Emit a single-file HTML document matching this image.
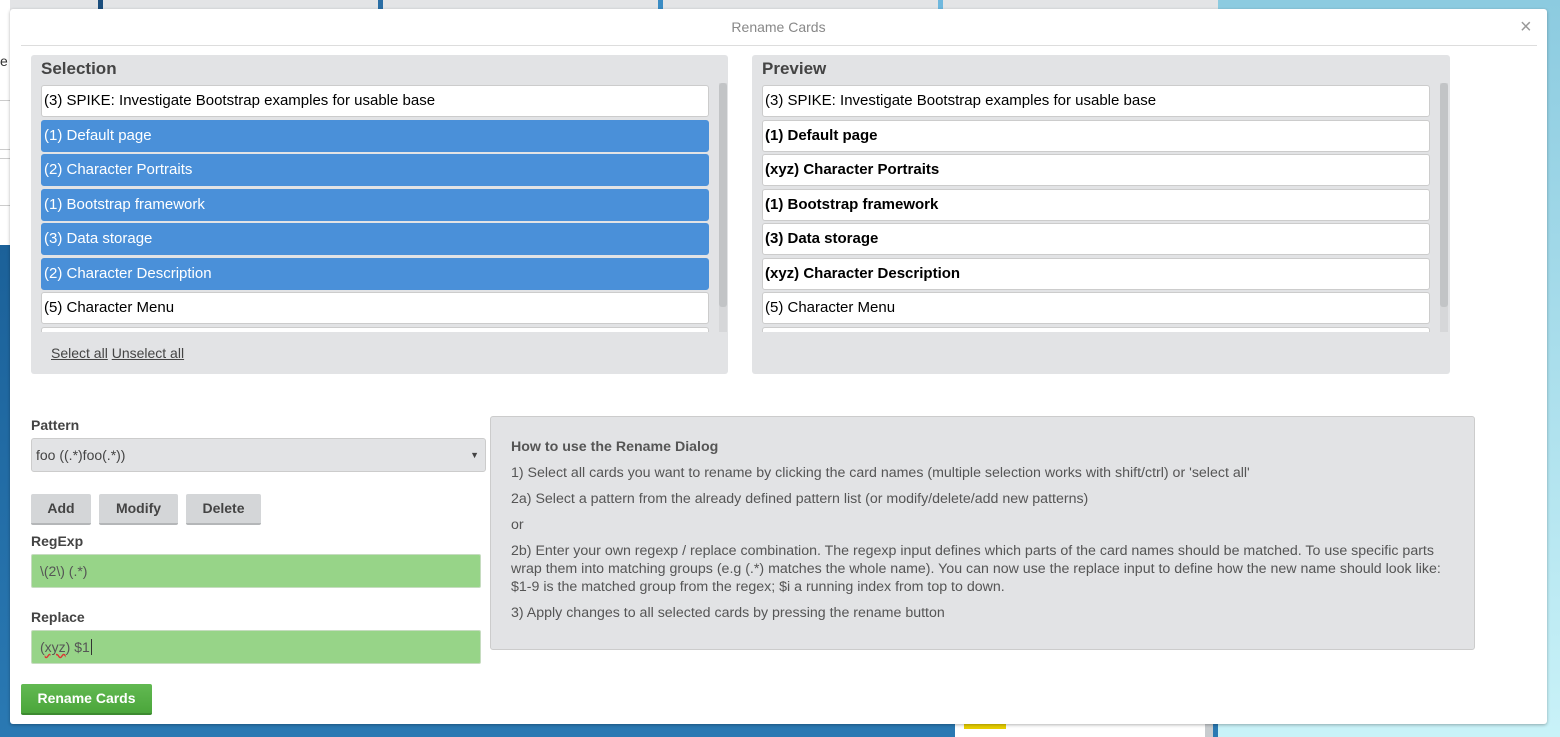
<!DOCTYPE html>
<html><head><style>
*{box-sizing:border-box}
body{margin:0;width:1560px;height:737px;position:relative;overflow:hidden;font-family:"Liberation Sans",sans-serif;background:linear-gradient(180deg,#14558c 0%,#2a79b3 100%)}
.abs{position:absolute}
.modal{left:10px;top:9px;width:1537px;height:715px;background:#fff;border-radius:3px;box-shadow:0 1px 3px rgba(0,0,0,.3)}
.panel{background:#e2e3e5;border-radius:3px}
.ph{font-weight:bold;font-size:17px;color:#444}
.item{position:absolute;left:10px;width:668px;height:32px;border:1px solid #ccc;border-radius:3px;background:#fff;font-size:15px;line-height:30px;padding-left:2px;color:#000;white-space:nowrap;overflow:hidden}
.sel{background:#4a90d9;color:#fff;border-color:#4a90d9}
.b{font-weight:bold}
.lbl{font-size:14px;font-weight:bold;color:#444}
.btn{background:#d4d6d8;border-bottom:2px solid #b4b6b8;border-radius:2px;font-weight:bold;font-size:14px;color:#444;text-align:center;line-height:29px;height:31px}
.inp{background:#97d488;border:1px solid #c6dcc0;border-radius:2px;font-size:14px;color:#555;padding-left:8px}
.help p{margin:0;font-size:14.2px;color:#555;position:absolute;left:20px;width:950px;line-height:18px}
</style></head><body>
<div class="abs" style="left:0;top:0;width:1220px;height:245px;background:#e3e4e6"></div>
<div class="abs" style="left:0;top:0;width:10px;height:245px;background:#fff"></div>
<div class="abs" style="left:0;top:100px;width:10px;height:50px;border-top:1px solid #ccc;border-bottom:1px solid #ccc;background:#fff"></div>
<div class="abs" style="left:0;top:158px;width:10px;height:48px;border-top:1px solid #ccc;border-bottom:1px solid #ccc;background:#fff"></div>
<div class="abs" style="left:0;top:53px;font-size:14px;color:#333">e</div>
<div class="abs" style="left:1218px;top:0;width:342px;height:737px;background:linear-gradient(180deg,#8ccbe0,#c9f2f8)"></div>
<div class="abs" style="left:98px;top:0;width:5px;height:9px;background:#1b4e7d"></div>
<div class="abs" style="left:378px;top:0;width:5px;height:9px;background:#2a6ea5"></div>
<div class="abs" style="left:658px;top:0;width:5px;height:9px;background:#3a8cc4"></div>
<div class="abs" style="left:938px;top:0;width:5px;height:9px;background:#6fb8de"></div>
<div class="abs" style="left:955px;top:724px;width:250px;height:13px;background:#fff"></div>
<div class="abs" style="left:964px;top:724px;width:42px;height:5px;background:#e8cf00"></div>
<div class="abs" style="left:1205px;top:724px;width:8px;height:13px;background:#c8cccf"></div>

<div class="abs modal">
 <div class="abs" style="left:0;top:10px;width:1537px;text-align:center;font-size:14px;color:#888">Rename Cards</div>
 <div class="abs" style="left:1510px;top:7px;font-size:20px;color:#999">×</div>
 <div class="abs" style="left:11px;top:36px;width:1516px;height:1px;background:#ddd"></div>

 <div class="abs panel" style="left:21px;top:46px;width:697px;height:319px">
  <div class="abs ph" style="left:10px;top:4px">Selection</div>
  <div class="abs" style="left:0;top:28px;width:697px;height:249px;overflow:hidden">
   <div class="item" style="top:2px">(3) SPIKE: Investigate Bootstrap examples for usable base</div>
   <div class="item sel" style="top:37px">(1) Default page</div>
   <div class="item sel" style="top:71px">(2) Character Portraits</div>
   <div class="item sel" style="top:106px">(1) Bootstrap framework</div>
   <div class="item sel" style="top:140px">(3) Data storage</div>
   <div class="item sel" style="top:175px">(2) Character Description</div>
   <div class="item" style="top:209px">(5) Character Menu</div>
   <div class="item" style="top:244px"></div>
   <div class="abs" style="left:688px;top:0;width:8px;height:249px;background:#d6d7d9"></div>
   <div class="abs" style="left:688px;top:0;width:8px;height:224px;background:#c2c4c6;border-radius:3px"></div>
  </div>
  <div class="abs" style="left:20px;top:290px;font-size:14px;color:#444"><u>Select all</u> <u>Unselect all</u></div>
 </div>

 <div class="abs panel" style="left:742px;top:46px;width:698px;height:319px">
  <div class="abs ph" style="left:10px;top:4px">Preview</div>
  <div class="abs" style="left:0;top:28px;width:698px;height:249px;overflow:hidden">
   <div class="item" style="top:2px">(3) SPIKE: Investigate Bootstrap examples for usable base</div>
   <div class="item b" style="top:37px">(1) Default page</div>
   <div class="item b" style="top:71px">(xyz) Character Portraits</div>
   <div class="item b" style="top:106px">(1) Bootstrap framework</div>
   <div class="item b" style="top:140px">(3) Data storage</div>
   <div class="item b" style="top:175px">(xyz) Character Description</div>
   <div class="item" style="top:209px">(5) Character Menu</div>
   <div class="item" style="top:244px"></div>
   <div class="abs" style="left:688px;top:0;width:8px;height:249px;background:#d6d7d9"></div>
   <div class="abs" style="left:688px;top:0;width:8px;height:224px;background:#c2c4c6;border-radius:3px"></div>
  </div>
 </div>

 <div class="abs lbl" style="left:21px;top:408px">Pattern</div>
 <div class="abs" style="left:21px;top:429px;width:455px;height:34px;background:#e2e3e5;border:1px solid #ccc;border-radius:3px;font-size:14px;color:#444;line-height:32px;padding-left:4px">foo ((.*)foo(.*))<span style="position:absolute;right:6px;font-size:9px">▼</span></div>
 <div class="abs btn" style="left:21px;top:485px;width:60px">Add</div>
 <div class="abs btn" style="left:89px;top:485px;width:79px">Modify</div>
 <div class="abs btn" style="left:176px;top:485px;width:75px">Delete</div>
 <div class="abs lbl" style="left:21px;top:524px">RegExp</div>
 <div class="abs inp" style="left:21px;top:545px;width:450px;height:34px;line-height:32px">\(2\) (.*)</div>
 <div class="abs lbl" style="left:21px;top:600px">Replace</div>
 <div class="abs inp" style="left:21px;top:621px;width:450px;height:34px;line-height:32px">(<span style="text-decoration:underline wavy #d33">xyz</span>) $1<span style="border-left:1px solid #333;margin-left:1px"></span></div>
 <div class="abs" style="left:11px;top:675px;width:131px;height:31px;background:linear-gradient(#62b952,#4ba63b);border-bottom:2px solid #3d8a30;border-radius:2px;color:#fff;font-weight:bold;font-size:14px;text-align:center;line-height:29px">Rename Cards</div>

 <div class="abs panel help" style="left:480px;top:407px;width:985px;height:234px;border:1px solid #ccc">
  <p style="top:21px;font-weight:bold">How to use the Rename Dialog</p>
  <p style="top:47px">1) Select all cards you want to rename by clicking the card names (multiple selection works with shift/ctrl) or 'select all'</p>
  <p style="top:73px">2a) Select a pattern from the already defined pattern list (or modify/delete/add new patterns)</p>
  <p style="top:99px">or</p>
  <p style="top:125px">2b) Enter your own regexp / replace combination. The regexp input defines which parts of the card names should be matched. To use specific parts wrap them into matching groups (e.g (.*) matches the whole name). You can now use the replace input to define how the new name should look like: $1-9 is the matched group from the regex; $i a running index from top to down.</p>
  <p style="top:187px">3) Apply changes to all selected cards by pressing the rename button</p>
 </div>
</div>
</body></html>
